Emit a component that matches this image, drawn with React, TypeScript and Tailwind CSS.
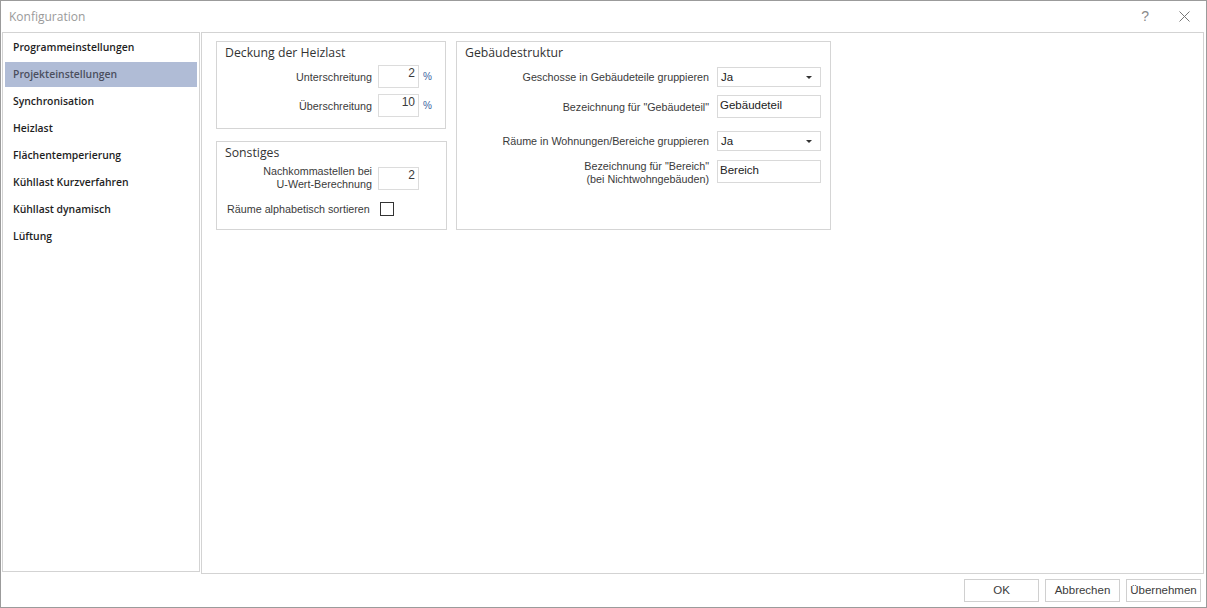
import React from 'react'

const navItems = [
  'Programmeinstellungen',
  'Projekteinstellungen',
  'Synchronisation',
  'Heizlast',
  'Flächentemperierung',
  'Kühllast Kurzverfahren',
  'Kühllast dynamisch',
  'Lüftung',
]

const label = "font-['Liberation_Sans',Arial,sans-serif] text-[10.75px] text-[#3b3b3b] leading-[13px]"

function Group({ title, className, children }: { title: string; className: string; children: React.ReactNode }) {
  return (
    <div className={`border border-[#d5d5d5] ${className}`}>
      <div className="font-['Open_Sans',sans-serif] text-[12.25px] text-[#333] pl-2 pt-[1px] leading-[20px]">{title}</div>
      {children}
    </div>
  )
}

function NumInput({ value }: { value: string }) {
  return (
    <div className={`w-[41px] h-[23px] border border-[#dcdcdc] bg-white text-right pr-[3px] pt-[1px] ${label} text-[12px] text-[#2a2a4a]`}>
      {value}
    </div>
  )
}

function Select({ value }: { value: string }) {
  return (
    <div className={`w-[104px] h-[20px] border border-[#d9d9d9] bg-white flex items-center justify-between pl-[3px] pr-[8px] ${label} text-[11.5px] text-[#222]`}>
      <span>{value}</span>
      <svg width="6" height="3" viewBox="0 0 6 3"><path d="M0 0h6L3 3z" fill="#333" /></svg>
    </div>
  )
}

function TextInput({ value }: { value: string }) {
  return (
    <div className={`w-[104px] h-[23px] border border-[#d9d9d9] bg-white pl-[2px] pt-[3px] ${label} text-[11.5px] text-[#222]`}>
      {value}
    </div>
  )
}

export default function App() {
  return (
    <div className="w-[1207px] h-[608px] bg-white border border-[#9b9b9b] flex flex-col overflow-hidden">
      {/* Title bar */}
      <div className="h-[31px] flex items-center justify-between pl-2 pr-[16px] shrink-0">
        <span className="font-['Open_Sans',sans-serif] text-[12px] text-[#9a9a9a]">Konfiguration</span>
        <div className="flex items-center gap-[30px] text-[#8a8a8a]">
          <span className="font-['Liberation_Sans',sans-serif] text-[14px]">?</span>
          <svg width="11" height="11" viewBox="0 0 11 11"><path d="M0.5 0.5l10 10M10.5 0.5l-10 10" stroke="#777" strokeWidth="1" /></svg>
        </div>
      </div>

      {/* Body */}
      <div className="flex flex-1 pl-[1px] pr-[2px] gap-[1px]">
        <div className="w-[198px] h-[540px] border border-[#d3d3d3] pt-[2px] px-[2px]">
          {navItems.map((item) => (
            <div
              key={item}
              className={`h-[25px] mb-[2px] flex items-center pl-[8px] font-['Open_Sans',sans-serif] font-semibold text-[10.4px] ${
                item === 'Projekteinstellungen' ? 'bg-[#b0bcd6] text-[#4b4f5e]' : 'text-[#1e1e1e]'
              }`}
            >
              {item}
            </div>
          ))}
        </div>

        <div className="flex-1 h-[542px] border border-[#d3d3d3] pt-[8px] pl-[14px]">
          <div className="flex gap-[9px] items-start">
            <div className="flex flex-col gap-[12px]">
              <Group title="Deckung der Heizlast" className="w-[230px] h-[88px]">
                <div className="flex flex-col gap-[6px] mt-[2px]">
                  <div className="flex items-center">
                    <span className={`${label} w-[161px] text-right pr-[6px] pt-[1px]`}>Unterschreitung</span>
                    <NumInput value="2" />
                    <span className="ml-[4px] text-[10px] text-[#3a64a0] font-['Liberation_Sans',sans-serif]">%</span>
                  </div>
                  <div className="flex items-center">
                    <span className={`${label} w-[161px] text-right pr-[6px] pt-[1px]`}>Überschreitung</span>
                    <NumInput value="10" />
                    <span className="ml-[4px] text-[10px] text-[#3a64a0] font-['Liberation_Sans',sans-serif]">%</span>
                  </div>
                </div>
              </Group>
              <Group title="Sonstiges" className="w-[231px] h-[89px]">
                <div className="flex items-center mt-[2px]">
                  <span className={`${label} w-[161px] text-right pr-[6px]`}>
                    Nachkommastellen bei
                    <br />
                    U-Wert-Berechnung
                  </span>
                  <NumInput value="2" />
                </div>
                <div className="flex items-center mt-[11px] pl-[10px]">
                  <span className={`${label} w-[153px]`}>Räume alphabetisch sortieren</span>
                  <div className="w-[14px] h-[14px] border border-[#333] bg-white" />
                </div>
              </Group>
            </div>

            <Group title="Gebäudestruktur" className="w-[375px] h-[189px]">
              <div className="flex flex-col mt-[4px]">
                <div className="flex items-center">
                  <span className={`${label} w-[260px] text-right pr-[8px]`}>Geschosse in Gebäudeteile gruppieren</span>
                  <Select value="Ja" />
                </div>
                <div className="flex items-start mt-[8px]">
                  <span className={`${label} w-[260px] text-right pr-[8px] pt-[6px]`}>Bezeichnung für "Gebäudeteil"</span>
                  <TextInput value="Gebäudeteil" />
                </div>
                <div className="flex items-center mt-[13px]">
                  <span className={`${label} w-[260px] text-right pr-[8px]`}>Räume in Wohnungen/Bereiche gruppieren</span>
                  <Select value="Ja" />
                </div>
                <div className="flex items-start mt-[9px]">
                  <span className={`${label} w-[260px] text-right pr-[8px]`}>
                    Bezeichnung für "Bereich"
                    <br />
                    (bei Nichtwohngebäuden)
                  </span>
                  <TextInput value="Bereich" />
                </div>
              </div>
            </Group>
          </div>
        </div>
      </div>

      {/* Buttons */}
      <div className="h-[34px] flex items-start justify-end gap-[6px] pr-[5px] pt-[5px] shrink-0">
        {['OK', 'Abbrechen', 'Übernehmen'].map((b) => (
          <button
            key={b}
            className={`w-[75px] h-[23px] border border-[#d0d0d0] bg-white ${label} text-[11.5px] text-[#2a2a2a]`}
          >
            {b}
          </button>
        ))}
      </div>
    </div>
  )
}
